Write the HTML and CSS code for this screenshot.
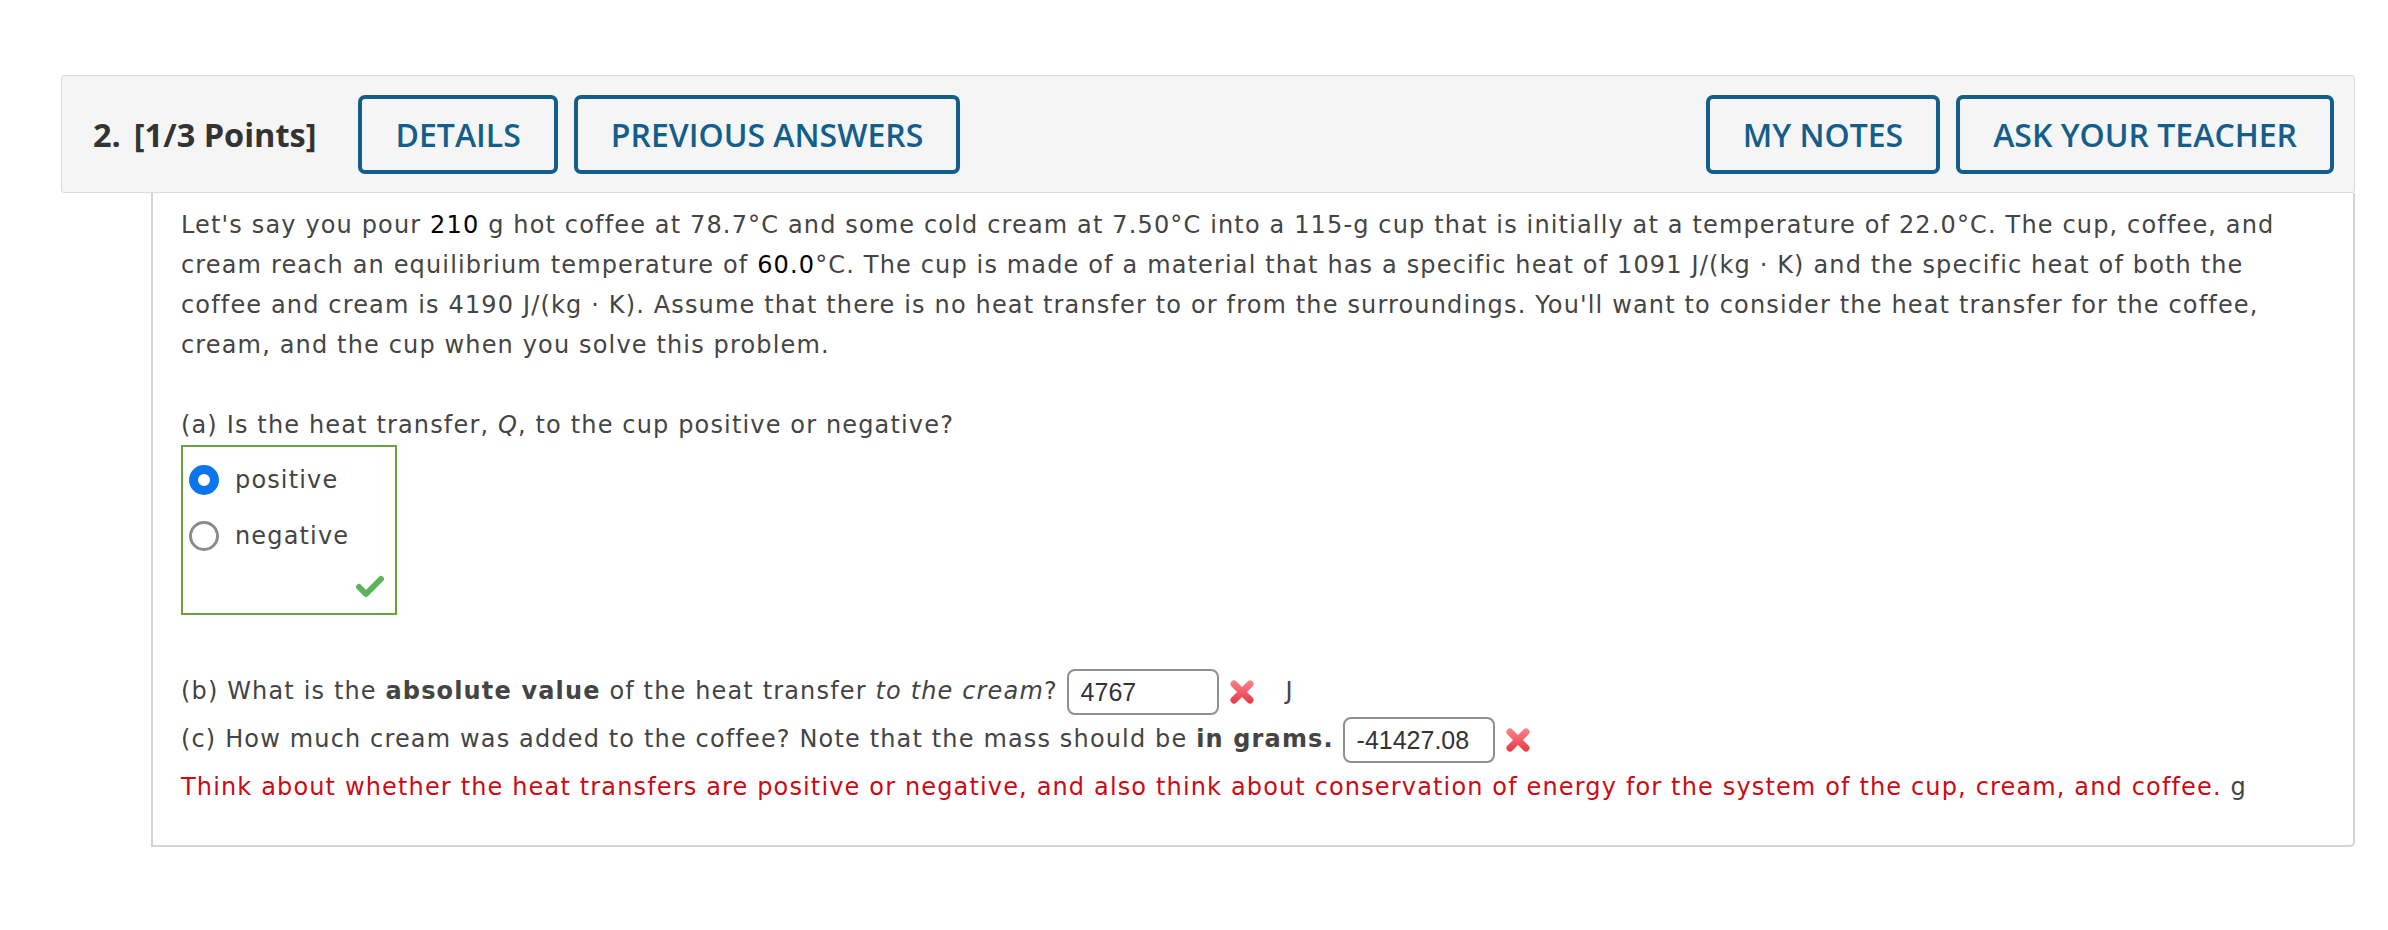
FILE: index.html
```html
<!DOCTYPE html>
<html lang="en">
<head>
    <meta charset="UTF-8">
    <meta name="viewport" content="width=device-width, initial-scale=1.0">
    <title>Question 2</title>
    <link rel="stylesheet" href="styles.css">
</head>
<body>
    <div class="question">
        <div class="q-header">
            <span class="q-points"><span class="q-num">2.</span>[1/3 Points]</span>
            <a class="btn" href="#">DETAILS</a>
            <a class="btn" href="#">PREVIOUS ANSWERS</a>
            <span class="spacer"></span>
            <a class="btn" href="#">MY NOTES</a>
            <a class="btn" href="#">ASK YOUR TEACHER</a>
        </div>

        <div class="q-body">
            <p class="stem">Let's say you pour <span class="val">210</span> g hot coffee at 78.7°C and some cold cream at 7.50°C into a 115-g cup that is initially at a temperature of 22.0°C. The cup, coffee, and cream reach an equilibrium temperature of <span class="val">60.0</span>°C. The cup is made of a material that has a specific heat of 1091 J/(kg · K) and the specific heat of both the coffee and cream is 4190 J/(kg · K). Assume that there is no heat transfer to or from the surroundings. You'll want to consider the heat transfer for the coffee, cream, and the cup when you solve this problem.</p>

            <div class="part">(a) Is the heat transfer, <i>Q</i>, to the cup positive or negative?</div>
            <div class="choices">
                <label class="choice"><span class="radio checked"></span>positive</label>
                <label class="choice"><span class="radio"></span>negative</label>
                <div class="check-row">
                    <!-- correct mark -->
                    <svg width="30" height="24" viewBox="0 0 30 24">
                        <polyline points="4,13 11,20 26,5" fill="none" stroke="#5cb35a" stroke-width="6" stroke-linecap="round" stroke-linejoin="round"/>
                    </svg>
                </div>
            </div>

            <div class="answer-row first">(b) What is the <b>absolute value</b> of the heat transfer <i>to the cream</i>? <input class="answer-box" type="text" value="4767" readonly><svg class="wrong" width="28" height="28" viewBox="0 0 28 28">
                    <defs>
                        <linearGradient id="redB" x1="0" y1="0" x2="0" y2="28" gradientUnits="userSpaceOnUse">
                            <stop offset="0" stop-color="#ff8a92"/>
                            <stop offset="1" stop-color="#e2323d"/>
                        </linearGradient>
                    </defs>
                    <path d="M6 6 L22 22 M22 6 L6 22" stroke="url(#redB)" stroke-width="7" stroke-linecap="round"/>
                </svg><span class="unit">J</span></div>

            <div class="answer-row">(c) How much cream was added to the coffee? Note that the mass should be <b>in grams.</b> <input class="answer-box" type="text" value="-41427.08" readonly><svg class="wrong" width="28" height="28" viewBox="0 0 28 28">
                    <path d="M6 6 L22 22 M22 6 L6 22" stroke="url(#redB)" stroke-width="7" stroke-linecap="round"/>
                </svg></div>

            <div class="feedback">Think about whether the heat transfers are positive or negative, and also think about conservation of energy for the system of the cup, cream, and coffee. <span class="unit-g">g</span></div>
        </div>
    </div>
</body>
</html>
```

FILE: styles.css
```css
body {
    margin: 0;
    padding: 75px 33px 40px 61px;
    background-color: #fff;
    font-family: "DejaVu Sans", Verdana, sans-serif;
}
.q-header {
    display: flex;
    align-items: center;
    height: 118px;
    box-sizing: border-box;
    padding: 0 20px 0 31px;
    background-color: #f5f5f5;
    border: 1px solid #dcdcdc;
    border-radius: 3px;
}
.q-points {
    font-family: "Open Sans", sans-serif;
    font-weight: 700;
    font-size: 32.5px;
    color: #333;
    margin-right: 42px;
}
.q-num {
    margin-right: 13px;
}
.btn {
    display: flex;
    align-items: center;
    height: 79px;
    box-sizing: border-box;
    padding: 0 33px;
    border: 4px solid #145e8b;
    border-radius: 7px;
    color: #145e8b;
    font-family: "Open Sans", sans-serif;
    font-weight: 600;
    font-size: 32px;
    text-decoration: none;
}
.btn + .btn {
    margin-left: 16px;
}
.spacer {
    flex: 1;
}
.q-body {
    margin-left: 90px;
    border: 2px solid #d4d4d4;
    border-top: none;
    border-bottom-right-radius: 5px;
    padding: 12px 40px 38px 28px;
    color: #444;
    font-size: 24px;
    letter-spacing: 1.15px;
    line-height: 40px;
}
.stem {
    margin: 0 0 40px;
}
.val {
    color: #000;
}
.choices {
    width: 216px;
    box-sizing: border-box;
    border: 2px solid #68a243;
    padding: 5px 6px;
}
.choice {
    display: flex;
    align-items: center;
    gap: 16px;
    height: 56px;
}
.radio {
    width: 30px;
    height: 30px;
    box-sizing: border-box;
    border: 3px solid #8c8c8c;
    border-radius: 50%;
    background-color: #fff;
}
.radio.checked {
    border: 9px solid #0c74ee;
}
.check-row {
    display: flex;
    justify-content: flex-end;
    align-items: center;
    height: 44px;
    padding-right: 4px;
}
.answer-row {
    height: 48px;
    line-height: 48px;
    white-space: nowrap;
}
.answer-row.first {
    margin-top: 52px;
}
.answer-box {
    width: 152px;
    height: 46px;
    box-sizing: border-box;
    vertical-align: middle;
    margin: 0;
    padding: 0 12px;
    border: 2px solid #8f8f8f;
    border-radius: 8px;
    font-family: "Liberation Sans", Arial, sans-serif;
    font-size: 25px;
    letter-spacing: 0;
    color: #333;
    background-color: #fff;
    outline: none;
}
.wrong {
    vertical-align: middle;
    margin-left: 9px;
}
.unit {
    margin-left: 30px;
}
.feedback {
    margin-top: 4px;
    color: #cc0a14;
}
.unit-g {
    color: #444;
}
```
